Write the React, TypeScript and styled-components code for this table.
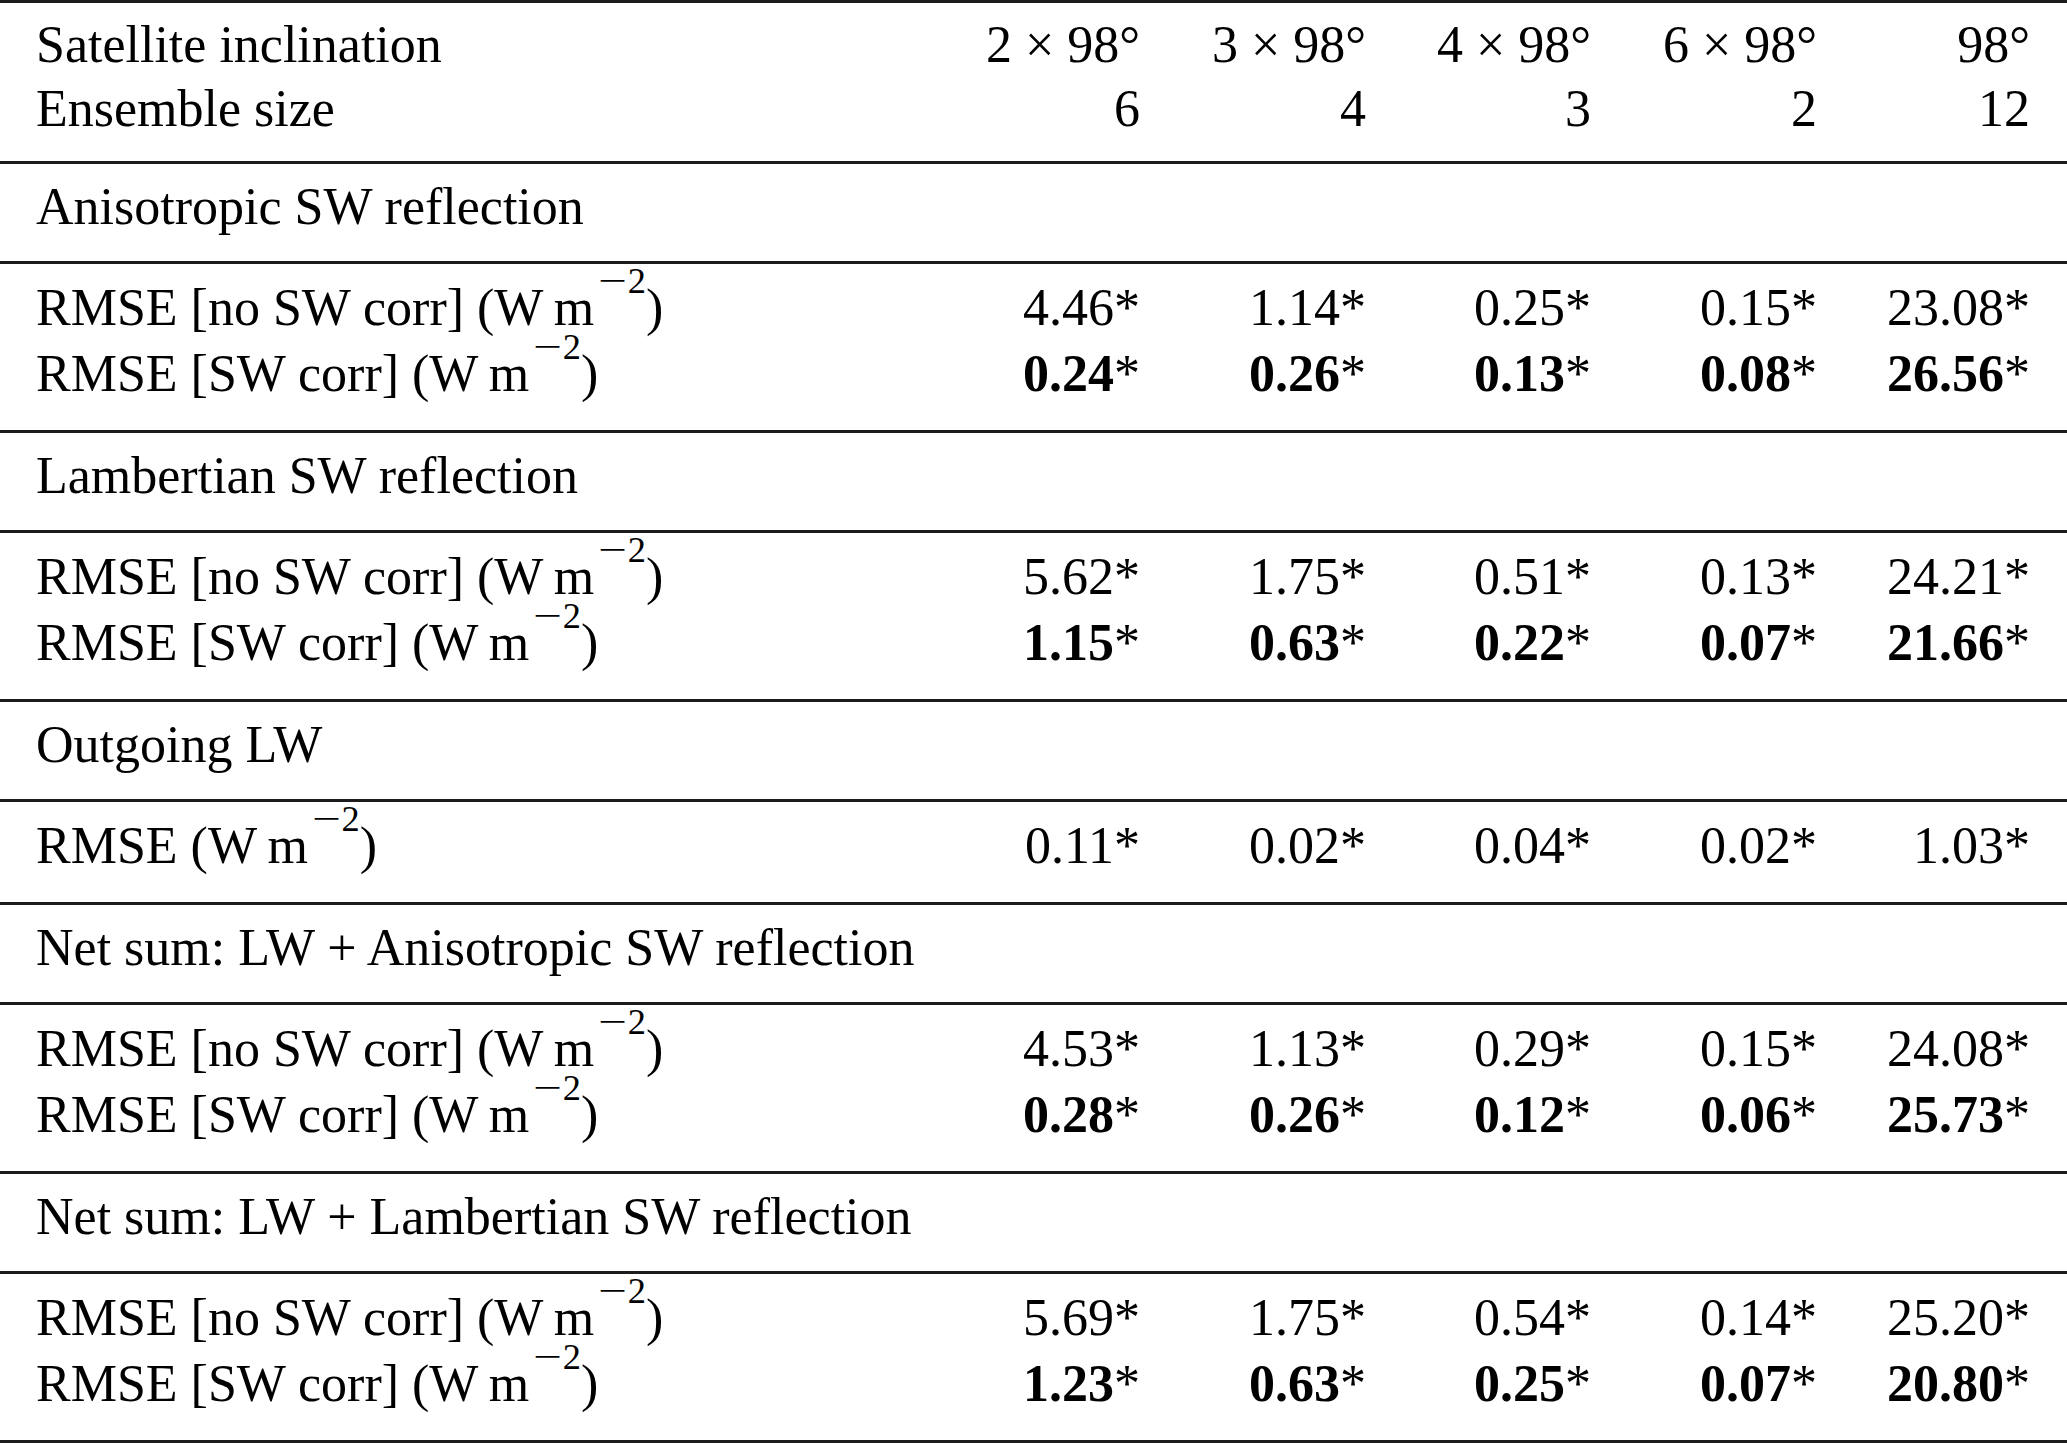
import React from 'react';
import styled, { createGlobalStyle } from 'styled-components';

const GlobalStyle = createGlobalStyle`
  html, body {
    margin: 0;
    padding: 0;
    background: #fff;
  }
  body {
    font-family: 'Liberation Serif', 'Times New Roman', serif;
    color: #000;
  }
`;

const Table = styled.div`
  width: 2067px;
  border-bottom: 3px solid #1c1c1c;
  font-size: 52px;
`;

const Section = styled.div<{ $dense?: boolean; $head?: boolean }>`
  display: grid;
  grid-template-columns: 951px 226px 226px 225px 226px 213px;
  border-top: 3px solid #1c1c1c;
  padding: ${p => (p.$head ? '10px 0 20px' : p.$dense ? '11px 0 23px' : '11px 0 22px')};
  line-height: ${p => (p.$dense ? '66px' : '64px')};
`;

const Label = styled.div`
  padding-left: 36px;
  white-space: nowrap;
`;

const SectionTitle = styled.div`
  grid-column: 1 / -1;
  padding-left: 36px;
  white-space: nowrap;
`;

const Value = styled.div`
  text-align: right;
  padding-right: 37px;
  white-space: nowrap;
`;

const Num = styled.span<{ $bold?: boolean }>`
  font-weight: ${p => (p.$bold ? 700 : 400)};
`;

const Sup = styled.sup`
  font-size: 0.7em;
  line-height: 0;
  vertical-align: 0;
  position: relative;
  top: -0.88em;
  margin-left: 4px;
`;

const Minus = styled.span`
  display: inline-block;
  transform: scaleX(1.4);
  margin: 0 5px 0 4px;
`;

const Unit = () => (
  <>
    (W{'\u2009'}m
    <Sup>
      <Minus>{'\u2212'}</Minus>2
    </Sup>
    )
  </>
);

interface DataRow {
  label: React.ReactNode;
  values: string[];
  bold?: boolean;
}

interface Block {
  title: string;
  rows: DataRow[];
}

const noCorr = <>RMSE [no SW corr] <Unit /></>;
const corr = <>RMSE [SW corr] <Unit /></>;

const blocks: Block[] = [
  {
    title: 'Anisotropic SW reflection',
    rows: [
      { label: noCorr, values: ['4.46', '1.14', '0.25', '0.15', '23.08'] },
      { label: corr, values: ['0.24', '0.26', '0.13', '0.08', '26.56'], bold: true },
    ],
  },
  {
    title: 'Lambertian SW reflection',
    rows: [
      { label: noCorr, values: ['5.62', '1.75', '0.51', '0.13', '24.21'] },
      { label: corr, values: ['1.15', '0.63', '0.22', '0.07', '21.66'], bold: true },
    ],
  },
  {
    title: 'Outgoing LW',
    rows: [{ label: <>RMSE <Unit /></>, values: ['0.11', '0.02', '0.04', '0.02', '1.03'] }],
  },
  {
    title: 'Net sum: LW + Anisotropic SW reflection',
    rows: [
      { label: noCorr, values: ['4.53', '1.13', '0.29', '0.15', '24.08'] },
      { label: corr, values: ['0.28', '0.26', '0.12', '0.06', '25.73'], bold: true },
    ],
  },
  {
    title: 'Net sum: LW + Lambertian SW reflection',
    rows: [
      { label: noCorr, values: ['5.69', '1.75', '0.54', '0.14', '25.20'] },
      { label: corr, values: ['1.23', '0.63', '0.25', '0.07', '20.80'], bold: true },
    ],
  },
];

const inclinations = ['2 × 98°', '3 × 98°', '4 × 98°', '6 × 98°', '98°'];
const ensembleSizes = ['6', '4', '3', '2', '12'];

const App: React.FC = () => (
  <>
    <GlobalStyle />
    <Table>
      <Section $head>
        <Label>Satellite inclination</Label>
        {inclinations.map(v => (
          <Value key={v}>{v}</Value>
        ))}
        <Label>Ensemble size</Label>
        {ensembleSizes.map(v => (
          <Value key={v}>{v}</Value>
        ))}
      </Section>

      {blocks.map(block => (
        <React.Fragment key={block.title}>
          <Section>
            <SectionTitle>{block.title}</SectionTitle>
          </Section>
          <Section $dense>
            {block.rows.map((row, i) => (
              <React.Fragment key={i}>
                <Label>{row.label}</Label>
                {row.values.map((v, j) => (
                  <Value key={j}>
                    <Num $bold={row.bold}>{v}</Num>*
                  </Value>
                ))}
              </React.Fragment>
            ))}
          </Section>
        </React.Fragment>
      ))}
    </Table>
  </>
);

export default App;
